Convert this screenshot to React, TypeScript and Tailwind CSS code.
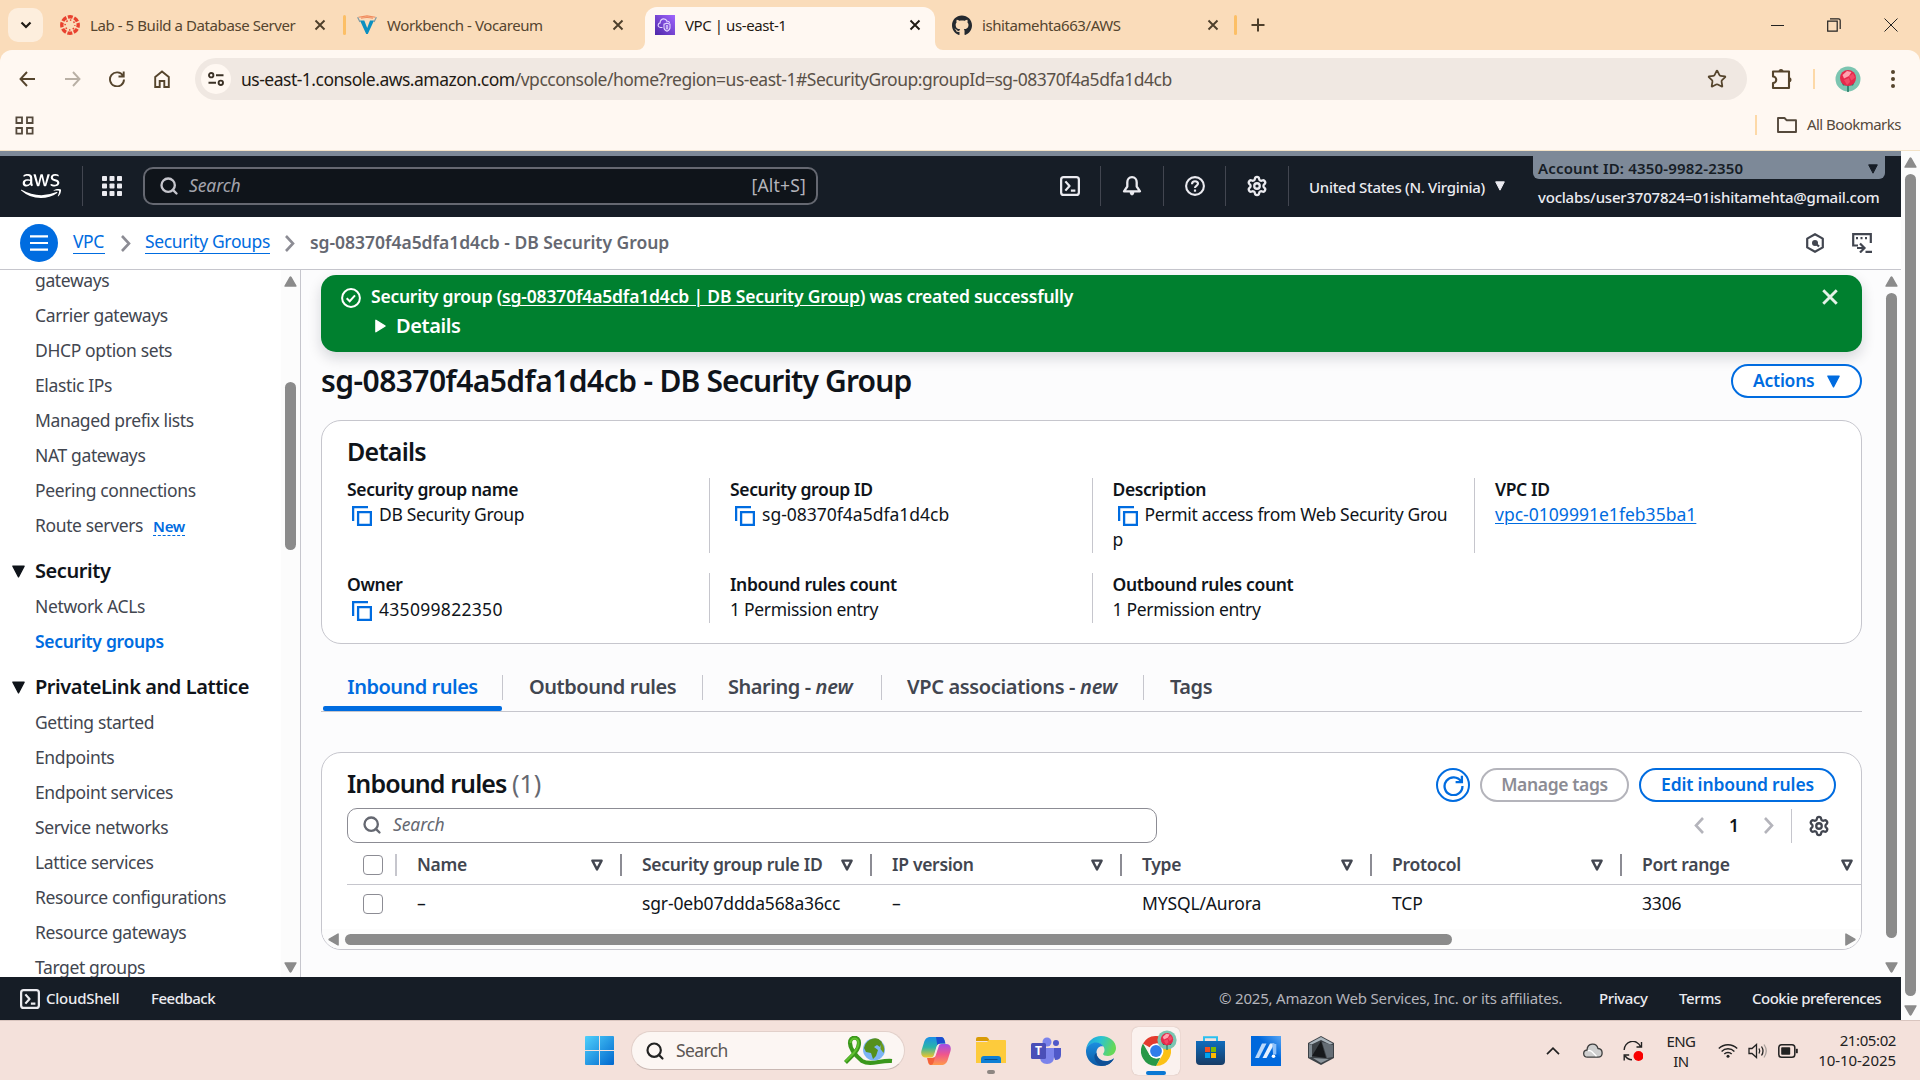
import React from "react";
import { Settings, Star, Search as SearchIcon } from "lucide-react";
import { FaAws, FaGithub } from "react-icons/fa";

type P = { className?: string };

/* ---------- shared glyphs ---------- */
const TriDown = ({ className = "" }: P) => (
  <svg viewBox="0 0 12 12" className={`shrink-0 ${className}`} fill="currentColor" stroke="currentColor" strokeWidth="1.2" strokeLinejoin="round">
    <path d="M.8 1h10.4L6 11z" />
  </svg>
);
const TriHollow = ({ className = "" }: P) => (
  <svg viewBox="0 0 12 12" className={`h-3 w-3 shrink-0 ${className}`} fill="none" stroke="#424650" strokeWidth="2.4" strokeLinejoin="round">
    <path d="M1.4 1.6h9.2L6 10.4z" />
  </svg>
);
const TriRight = ({ className = "" }: P) => (
  <svg viewBox="0 0 10 12" className={`shrink-0 ${className}`} fill="currentColor" stroke="currentColor" strokeWidth="1.2" strokeLinejoin="round">
    <path d="M.8 .8v10.4L9.2 6z" />
  </svg>
);
const ScrollArrow = ({ className = "" }: P) => (
  <svg viewBox="0 0 12 10" className={`h-[11px] w-[13px] shrink-0 ${className}`} fill="#8b8b8b" stroke="#8b8b8b" strokeWidth="1.4" strokeLinejoin="round">
    <path d="M1 9.2h10L6.4 1.2q-.4-.5-.8 0z" />
  </svg>
);
const Shell = ({ className = "" }: P) => (
  <svg viewBox="0 0 16 16" className={`h-5 w-5 shrink-0 ${className}`} fill="none" stroke="currentColor" strokeWidth="1.8" strokeLinejoin="round">
    <rect x=".9" y=".9" width="14.2" height="14.2" rx="2" />
    <path d="M4.3 4.3 7.6 8l-3.3 3.7M8.7 11.6h3.6" />
  </svg>
);
const Close = ({ className = "" }: P) => (
  <svg viewBox="0 0 12 12" className={`shrink-0 ${className}`} fill="none" stroke="currentColor" strokeWidth="1.9">
    <path d="M1.5 1.5l9 9M10.5 1.5l-9 9" />
  </svg>
);
const Copy = () => (
  <svg viewBox="0 0 20 20" className="h-5 w-5 shrink-0" fill="none" stroke="#006ce0" strokeWidth="2.3">
    <path d="M1.1 15V1.1H16" />
    <path d="M6.1 6.1h12.8v12.8H6.1z" />
  </svg>
);
const Chevron = ({ className = "" }: P) => (
  <svg viewBox="0 0 10 17" className={`h-[17px] w-[10px] shrink-0 ${className}`} fill="none" stroke="currentColor" strokeWidth="2.6">
    <path d="M1 1l7 7.5L1 16" />
  </svg>
);

/* ---------- browser chrome ---------- */
const Canvas = () => (
  <svg viewBox="0 0 20 20" className="h-5 w-5 shrink-0" fill="none" stroke="#e8412e">
    <circle cx="10" cy="10" r="8.2" strokeWidth="3.4" strokeDasharray="4.9 1.54" strokeDashoffset="2.4" />
    <circle cx="10" cy="10" r="4.9" strokeWidth="1.5" strokeDasharray="1.5 2.35" strokeDashoffset=".7" />
  </svg>
);
const Vocareum = () => (
  <svg viewBox="0 0 20 20" className="h-5 w-5 shrink-0" fill="none">
    <path d="M1.500 2.200 10 .9l8.500 1.300M4 3.200q6-1.400 12 0" stroke="#f08a5d" strokeWidth="1.100" />
    <path d="M.6 2.200 3 7M19.400 2.200 17 7" stroke="#7d9aa5" strokeWidth="1.200" />
    <path d="M3 5.500h4.300l2.900 7.500L13 5.500h4L10.800 19H9.200z" fill="#0b8fc0" />
  </svg>
);
const VpcIcon = () => (
  <svg viewBox="0 0 20 20" className="h-5 w-5 shrink-0" fill="none" stroke="#e4d6ff" strokeWidth="1.1">
    <defs>
      <linearGradient id="vpc" x1="0" y1="1" x2="1" y2="0"><stop stopColor="#4d27a8" /><stop offset="1" stopColor="#a166ff" /></linearGradient>
    </defs>
    <path d="M0 0h20v20H0z" fill="url(#vpc)" stroke="none" />
    <path d="M7.500 12.500H5.500C3.600 12.300 3 11 3.200 9.800 3.400 8.600 4.200 8 5.100 7.900 5 5.500 6.700 3.900 8.700 3.900c1.800 0 2.800 1 3.300 2.400 1.500-.3 2.400.5 2.500 1.700" />
    <path d="M12 8.200l3 1v3.600c0 1.700-1.300 2.700-3 3.400-1.700-.7-3-1.700-3-3.400V9.200z" />
    <path d="M11.300 10.500h1.400v3.500h-1.400z" strokeWidth=".9" />
  </svg>
);
const Rose = ({ className = "" }: P) => (
  <svg viewBox="0 0 26 26" className={`shrink-0 ${className}`}>
    <circle cx="13" cy="13" r="12.500" fill="#7cc5b1" />
    <path d="M13 26v-8" stroke="#0d6b55" strokeWidth="1.300" />
    <path d="M6 15l7 5 7-5-2 4.500-5-.5-5 .5z" fill="#0d7f66" />
    <circle cx="13" cy="12" r="8" fill="#e6294b" />
    <path d="M7.500 9 12 5l4.500 1-2.500 4-5 2.500z" fill="#ffa3b0" />
    <path d="M14 10.500l4-3 2 4-3.500 3zM9 14l5-2 1 4-3 3z" fill="#f24a66" />
  </svg>
);

const tabText = "whitespace-nowrap text-[15px] leading-none tracking-[-0.42px]";

function TabStrip() {
  return (
    <div className="flex h-[50px] items-end bg-[#fadcba]">
      <div className="flex h-[50px] w-[637px] items-center pl-2 pb-2">
        <div className="mt-2 flex h-[34px] w-[35px] items-center justify-center rounded-[10px] bg-[#fdeedd]">
          <svg viewBox="0 0 12 8" className="h-2 w-3" fill="none" stroke="#1f1a14" strokeWidth="2.200"><path d="M1.500 1.500 6 6l4.500-4.500" /></svg>
        </div>
        <div className="mt-2 ml-[17px] flex items-center">
          <Canvas />
          <span className={`ml-[10px] w-[220px] text-[#55452f] ${tabText}`}>Lab - 5 Build a Database Server</span>
          <Close className="ml-[4px] h-3 w-3 text-[#4d3f2b]" />
          <span className="ml-[17px] h-5 w-[3px] rounded bg-[#fcbf66]" />
          <span className="ml-[11px] flex"><Vocareum /></span>
          <span className={`ml-[10px] w-[225px] text-[#55452f] ${tabText}`}>Workbench - Vocareum</span>
          <Close className="h-3 w-3 text-[#4d3f2b]" />
        </div>
      </div>
      <svg viewBox="0 0 8 8" className="h-2 w-2 shrink-0"><path d="M8 0v8H0a8 8 0 0 0 8-8z" fill="#fff8f2" /></svg>
      <div className="flex h-[43px] w-[290px] items-center rounded-t-[12px] bg-[#fff8f2] pb-[7px] pl-[10px]">
        <VpcIcon />
        <span className={`ml-[10px] w-[224px] text-[#1f1a14] ${tabText}`}>VPC | us-east-1</span>
        <Close className="h-3 w-3 text-[#1f1a14]" />
      </div>
      <svg viewBox="0 0 8 8" className="h-2 w-2 shrink-0"><path d="M0 0v8h8a8 8 0 0 1-8-8z" fill="#fff8f2" /></svg>
      <div className="flex h-[50px] flex-1 items-center pl-[9px]">
        <FaGithub className="h-[21px] w-5 shrink-0 text-[#24292f]" />
        <span className={`ml-[10px] w-[225px] text-[#55452f] ${tabText}`}>ishitamehta663/AWS</span>
        <Close className="h-3 w-3 text-[#4d3f2b]" />
        <span className="ml-[15px] h-5 w-[3px] rounded bg-[#fcbf66]" />
        <svg viewBox="0 0 14 14" className="ml-[14px] h-[14px] w-[14px]" stroke="#4d3f2b" strokeWidth="2"><path d="M7 .5v13M.5 7h13" /></svg>
        <div className="ml-auto mr-[22px] flex items-center gap-[43px]">
          <span className="h-px w-[13px] bg-[#222]" />
          <svg viewBox="0 0 14 14" className="h-[14px] w-[14px]" fill="none" stroke="#222" strokeWidth="1.200"><path d="M.7 3.200h9.500v10H.7zM3 .9h8.500q1.700 0 1.700 1.700v8.400" /></svg>
          <svg viewBox="0 0 14 14" className="h-[14px] w-[14px]" stroke="#222" strokeWidth="1"><path d="M.5.500l13 13M13.500.500l-13 13" /></svg>
        </div>
      </div>
    </div>
  );
}

function Toolbar() {
  return (
    <div className="bg-[#fadcba]">
      <div className="flex h-[101px] flex-col rounded-t-[12px] border-b border-[#f3e3c8] bg-[#fff8f2] pt-2">
        <div className="flex h-[42px] items-center text-[#56452d]">
          <svg viewBox="0 0 16 16" className="ml-[19px] h-[16px] w-[16px]" fill="none" stroke="currentColor" strokeWidth="1.900"><path d="M8 1 1.500 8 8 15M1.500 8H16" /></svg>
          <svg viewBox="0 0 16 16" className="ml-[30px] h-[16px] w-[16px] text-[#b9b0a5]" fill="none" stroke="currentColor" strokeWidth="1.900"><path d="M8 1l6.500 7L8 15M14.500 8H0" /></svg>
          <svg viewBox="0 0 16 16" className="ml-[28px] h-[16px] w-[16px]" fill="none" stroke="currentColor" strokeWidth="1.900"><path d="M14 4.800A7 7 0 1 0 15 8.500M14.700.500v5H9.500" /></svg>
          <svg viewBox="0 0 16 18" className="ml-[29px] h-[18px] w-[16px]" fill="none" stroke="currentColor" strokeWidth="1.900"><path d="M1.200 7 8 1.400 14.800 7v10h-4.500v-6H5.700v6H1.200z" /></svg>
          <div className="ml-[25px] flex h-[42px] w-[1552px] items-center rounded-full bg-[#f0e8e2] pl-[6px] pr-[20px]">
            <div className="flex h-[30px] w-[30px] items-center justify-center rounded-full bg-[#fff8f2]">
              <svg viewBox="0 0 16 14" className="h-[14px] w-4" fill="none" stroke="#3b3126" strokeWidth="1.900"><circle cx="3.200" cy="3.200" r="2.200" /><path d="M8 3.200h7.500M.500 10.800H8" /><circle cx="12.800" cy="10.800" r="2.200" /></svg>
            </div>
            <span className="ml-[10px] mt-[2px] whitespace-nowrap text-[17.5px] leading-none tracking-[-0.5px] text-[#5a5148]">
              <span className="text-[#1f1a14]">us-east-1.console.aws.amazon.com</span>/vpcconsole/home?region=us-east-1#SecurityGroup:groupId=sg-08370f4a5dfa1d4cb
            </span>
            <Star className="ml-auto h-5 w-5" strokeWidth={2.100} strokeLinejoin="miter" />
          </div>
          <svg viewBox="0 0 22 22" className="ml-[24px] h-[22px] w-[22px]" fill="none" stroke="currentColor" strokeWidth="2.100" strokeLinejoin="round">
            <path d="M2 3.500h16v16.500H2v-5a3.200 3.200 0 0 0 0-6.500z" />
            <path d="M7.500 3.500a2.500 2.500 0 0 1 5 0zM18 9.300a2.500 2.500 0 0 1 0 5z" fill="currentColor" stroke="none" />
          </svg>
          <span className="ml-[20px] h-5 w-[2px] bg-[#fdd9a8]" />
          <Rose className="ml-[20px] h-[26px] w-[26px]" />
          <svg viewBox="0 0 4 18" className="ml-[30px] h-[18px] w-1" fill="#56452d"><circle cx="2" cy="2" r="2" /><circle cx="2" cy="9" r="2" /><circle cx="2" cy="16" r="2" /></svg>
        </div>
        <div className="flex h-[50px] items-center pl-[15px] pr-[19px] text-[#55493c]">
          <svg viewBox="0 0 19 19" className="h-[19px] w-[19px]" fill="none" stroke="currentColor" strokeWidth="1.800"><path d="M1.400 1.400h5.600V7H1.400zM12 1.400h5.600V7H12zM1.400 12h5.600v5.600H1.400zM12 12h5.600v5.600H12z" /></svg>
          <span className="ml-auto h-5 w-[2px] bg-[#fdd9a8]" />
          <svg viewBox="0 0 20 16" className="ml-[20px] h-4 w-5" fill="none" stroke="currentColor" strokeWidth="1.900" strokeLinejoin="round"><path d="M1 1h6.500l2 2.200H19V15H1z" /></svg>
          <span className="ml-[10px] w-[94px] pb-px whitespace-nowrap text-[15px] leading-none tracking-[-0.55px]">All Bookmarks</span>
        </div>
      </div>
    </div>
  );
}

/* ---------- console header ---------- */
const navDivider = "h-10 w-px bg-[#424650]";

function ConsoleHeader() {
  return (
    <header className="border-t-[5px] border-[#7d8998] bg-[#161d26]">
      <div className="flex h-[61px] items-start text-[#ebebf0]">
        <div className="flex h-[60px] items-center">
          <FaAws className="ml-[21px] h-[32px] w-10 shrink-0 text-white" />
          <span className={`ml-[21px] w-[2px] ${navDivider}`} />
          <svg viewBox="0 0 20 20" className="ml-[19px] h-5 w-5 shrink-0" fill="currentColor">
            {[0, 7.500, 15].map((y) => [0, 7.500, 15].map((x) => <rect key={`${x}-${y}`} x={x} y={y} width="5" height="5" rx=".8" />))}
          </svg>
          <div className="ml-[21px] flex h-[38px] w-[675px] items-center rounded-[10px] border-2 border-[#656871] bg-[#0f141a] pl-[14px] pr-[10px]">
            <SearchIcon className="h-5 w-5 text-[#c6c6cd]" strokeWidth={2.800} />
            <span className="ml-[10px] text-[17.5px] italic leading-none tracking-[-0.1px] text-[#a4a4ad]">Search</span>
            <span className="ml-auto text-[17.5px] leading-none tracking-[0.2px] text-[#b4b4bb]">[Alt+S]</span>
          </div>
          <Shell className="ml-[242px]" />
          <span className={`ml-[20px] ${navDivider}`} />
          <svg viewBox="0 0 20 22" className="ml-[21px] h-[22px] w-5 shrink-0" fill="none" stroke="currentColor" strokeWidth="2.300" strokeLinejoin="round">
            <path d="M10 2.200c-3 0-4.700 2.200-4.700 5V11.500L2 16.300h16l-3.300-4.800V7.200c0-2.800-1.700-5-4.700-5z" /><path d="M8 17.500q.5 2.500 2 2.500t2-2.500z" fill="currentColor" strokeWidth="1" />
          </svg>
          <span className={`ml-[21px] ${navDivider}`} />
          <svg viewBox="0 0 20 20" className="ml-[21px] h-5 w-5 shrink-0" fill="none" stroke="currentColor" strokeWidth="2.100">
            <circle cx="10" cy="10" r="8.900" /><path d="M7 8.200q0-3 3-3t3 2.600c0 1.700-3 1.900-3 4.200" /><path d="M10 13.500v2.200" strokeWidth="2.200" />
          </svg>
          <span className={`ml-[20px] ${navDivider}`} />
          <Settings className="ml-[20px] h-[22px] w-[22px] shrink-0" strokeWidth={2.500} />
          <span className={`ml-[20px] ${navDivider}`} />
          <span className="ml-[20px] mt-[2px] w-[186px] whitespace-nowrap text-[15px] font-medium leading-none tracking-[-0.3px]">United States (N. Virginia)</span>
          <TriDown className="h-[10px] w-[10px]" />
        </div>
        <div className="ml-[28px] flex h-[61px] w-[352px] flex-col">
          <div className="flex h-[23px] items-center justify-between rounded-b-[6px] bg-[#7d8998] pl-[5px] pr-[7px] pt-[2px] text-[#161d26]">
            <span className="whitespace-nowrap text-[15px] font-semibold leading-none tracking-[0.18px]">Account ID: 4350-9982-2350</span>
            <TriDown className="h-[10px] w-[10px]" />
          </div>
          <div className="flex h-[36px] items-center pl-[5px]">
            <span className="whitespace-nowrap text-[15px] font-medium leading-none tracking-[-0.22px]">voclabs/user3707824=01ishitamehta@gmail.com</span>
          </div>
        </div>
      </div>
    </header>
  );
}

function Breadcrumbs() {
  return (
    <div className="flex h-[53px] shrink-0 items-center border-b border-[#c6c6cd] bg-white pl-5 text-[17.5px] leading-none">
      <div className="flex h-[38px] w-[38px] items-center justify-center rounded-full bg-[#006ce0]">
        <svg viewBox="0 0 18 16" className="h-4 w-[18px]" stroke="#fff" strokeWidth="2.200"><path d="M0 1.300h18M0 8h18M0 14.700h18" /></svg>
      </div>
      <span className="ml-[15px] mt-px w-[32px] border-b border-[#006ce0] pb-[2px] tracking-[-0.4px] text-[#006ce0]">VPC</span>
      <Chevron className="ml-[16px] text-[#8c8c94]" />
      <span className="ml-[14px] mt-px w-[125px] whitespace-nowrap border-b border-[#006ce0] pb-[2px] tracking-[-0.36px] text-[#006ce0]">Security Groups</span>
      <Chevron className="ml-[15px] text-[#8c8c94]" />
      <span className="ml-[15px] whitespace-nowrap font-semibold tracking-[-0.03px] text-[#656871]">sg-08370f4a5dfa1d4cb - DB Security Group</span>
      <div className="ml-auto mr-[29px] flex items-center gap-[27px] text-[#424650]">
        <svg viewBox="0 0 20 20" className="h-5 w-5" fill="none" stroke="currentColor" strokeWidth="2.200" strokeLinejoin="round"><path d="M10 1.200l7.800 4.400v8.800L10 18.800l-7.800-4.400V5.600z" /><circle cx="10" cy="10" r="3" fill="currentColor" stroke="none" /><path d="M10 10l4 3.500" /></svg>
        <svg viewBox="0 0 20 20" className="h-5 w-5" fill="none" stroke="currentColor" strokeWidth="2.200"><path d="M6 12.500H1.200V1.200h17.600V10M4 5.200h2M8.500 5.200h2M13 5.200h2M5 15h6M8 10.500l4.500 4.500L8 19.500M13.500 18.900H20" /></svg>
      </div>
    </div>
  );
}

/* ---------- sidebar ---------- */
function NavItem({ label, children }: { label: string; children?: React.ReactNode }) {
  const active = label === "Security groups";
  return (
    <div className={`flex h-[35px] shrink-0 items-center whitespace-nowrap pl-[35px] ${active ? "font-semibold tracking-[-0.3px] text-[#006ce0]" : "tracking-[-0.37px] text-[#424650]"}`}>
      {label}
      {children}
    </div>
  );
}
const NavHead = ({ label }: { label: string }) => (
  <div className="mt-[10px] flex h-[36px] shrink-0 items-center whitespace-nowrap pl-[12px] text-[20px] font-semibold tracking-[-0.43px] text-[#0f141a]">
    <TriDown className="mr-[10px] h-[13px] w-[13px]" />
    {label}
  </div>
);

function Sidebar() {
  return (
    <aside className="flex h-[707px] w-[301px] shrink-0 overflow-hidden border-r border-[#c6c6cd] bg-white">
      <nav className="-mt-[7px] flex h-[714px] w-[281px] flex-col overflow-hidden text-[17.5px] leading-none">
        {["gateways", "Carrier gateways", "DHCP option sets", "Elastic IPs", "Managed prefix lists", "NAT gateways", "Peering connections"].map((l) => <NavItem key={l} label={l} />)}
        <NavItem label="Route servers">
          <span className="ml-[10px] border-b border-dashed border-[#006ce0] pb-px pt-[3px] text-[15px] font-semibold tracking-[-0.3px] text-[#006ce0]">New</span>
        </NavItem>
        <NavHead label="Security" />
        <NavItem label="Network ACLs" />
        <NavItem label="Security groups" />
        <NavHead label="PrivateLink and Lattice" />
        {["Getting started", "Endpoints", "Endpoint services", "Service networks", "Lattice services", "Resource configurations", "Resource gateways", "Target groups"].map((l) => <NavItem key={l} label={l} />)}
      </nav>
      <div className="flex w-[19px] flex-col items-center bg-[#fcfcfc] pt-[6px]">
        <ScrollArrow />
        <span className="mt-[95px] h-[168px] w-[11px] rounded-full bg-[#8b8b8b]" />
        <ScrollArrow className="mt-auto mb-[4px] rotate-180" />
      </div>
    </aside>
  );
}

/* ---------- main ---------- */
function Banner() {
  return (
    <div className="flex h-[77px] shrink-0 rounded-[15px] bg-[#00802f] pl-5 pt-3 text-white shadow-[0_6px_14px_rgba(15,20,40,0.16)]">
      <svg viewBox="0 0 20 20" className="mt-px h-5 w-5" fill="none" stroke="#fff" strokeWidth="2"><circle cx="10" cy="10" r="8.900" /><path d="M5.700 10.200l3 3 5.300-5.800" /></svg>
      <div className="ml-[10px] flex flex-col font-semibold leading-none">
        <span className="flex h-5 items-center whitespace-pre text-[17.5px] tracking-[-0.24px]">
          Security group (<span className="tracking-[-0.17px] underline decoration-1 underline-offset-[2px]">sg-08370f4a5dfa1d4cb | DB Security Group</span>) was created successfully
        </span>
        <span className="mt-[9px] flex h-5 items-center pl-1 text-[20px] tracking-[-0.4px]"><TriRight className="mr-[10px] h-[14px] w-[11px]" />Details</span>
      </div>
      <Close className="ml-auto mr-[23px] mt-[1px] h-[18px] w-[18px] text-[#e4f2e8]" />
    </div>
  );
}

function Field({ label, children, first = false }: { label: string; children: React.ReactNode; first?: boolean }) {
  return (
    <div className={`flex flex-col whitespace-nowrap ${first ? "w-[362px]" : "w-[382.5px] border-l border-[#c6c6cd] pl-[20px]"}`}>
      <span className="-mt-px flex h-[25px] items-center font-semibold tracking-[-0.35px]">{label}</span>
      <span className="flex h-[25px] items-center tracking-[-0.3px]">{children}</span>
    </div>
  );
}

const CopyButton = () => <span className="ml-[5px] mr-[7px] mt-[2px]"><Copy /></span>;

function DetailsCard() {
  return (
    <section className="flex h-[224px] shrink-0 flex-col rounded-[20px] border border-[#c6c6cd] bg-white pl-[25px] leading-none text-[#0f141a]">
      <h2 className="mt-[15px] flex h-[31px] items-center text-[25px] font-semibold tracking-[-0.75px]">Details</h2>
      <div className="mt-[11px] flex h-[75px] text-[17.5px]">
        <Field label="Security group name" first><CopyButton /><span className="tracking-[-0.33px]">DB Security Group</span></Field>
        <Field label="Security group ID"><CopyButton /><span className="tracking-[0px]">sg-08370f4a5dfa1d4cb</span></Field>
        <div className="flex w-[382.5px] flex-col whitespace-nowrap border-l border-[#c6c6cd] pl-[20px]">
          <span className="-mt-px flex h-[25px] items-center font-semibold tracking-[-0.4px]">Description</span>
          <span className="flex h-[25px] items-center"><CopyButton /><span className="tracking-[-0.31px]">Permit access from Web Security Grou</span></span>
          <span className="flex h-[25px] items-center">p</span>
        </div>
        <Field label="VPC ID"><span className="tracking-[0.02px] text-[#006ce0] underline decoration-1 underline-offset-[2px]">vpc-0109991e1feb35ba1</span></Field>
      </div>
      <div className="mt-[20px] flex h-[50px] text-[17.5px]">
        <Field label="Owner" first><CopyButton /><span className="tracking-[0.3px]">435099822350</span></Field>
        <Field label="Inbound rules count">1 Permission entry</Field>
        <Field label="Outbound rules count">1 Permission entry</Field>
      </div>
    </section>
  );
}

function Tabs() {
  const tab = "flex h-[48px] items-center whitespace-nowrap";
  const sep = "h-[25px] w-px bg-[#c6c6cd]";
  return (
    <div className="mt-[19px] flex h-[49px] shrink-0 items-center border-b border-[#c6c6cd] text-[20px] font-semibold leading-none tracking-[-0.45px] text-[#424650]">
      <div className="ml-[2px] flex h-[48px] w-[179px] flex-col items-center justify-between text-[#006ce0]">
        <span className="flex h-[48px] items-center whitespace-nowrap tracking-[-0.5px]">Inbound rules</span>
        <span className="-mt-[5px] h-[5px] w-[179px] shrink-0 rounded-[2px] bg-[#006ce0]" />
      </div>
      <span className={sep} />
      <span className={`${tab} w-[199px] pl-[26px]`}>Outbound rules</span>
      <span className={sep} />
      <span className={`${tab} w-[178px] pl-[25px]`}><span className="whitespace-pre">Sharing - </span><em className="tracking-[-0.1px]">new</em></span>
      <span className={sep} />
      <span className={`${tab} w-[261px] pl-[25px]`}><span className="whitespace-pre tracking-[-0.35px]">VPC associations - </span><em className="tracking-[-0.1px]">new</em></span>
      <span className={sep} />
      <span className={`${tab} pl-[26px]`}>Tags</span>
    </div>
  );
}

const Checkbox = () => <span className="h-5 w-5 shrink-0 rounded-[4px] border border-[#8c8c94] bg-white" />;
const columns: [string, string][] = [["Name", "–"], ["Security group rule ID", "sgr-0eb07ddda568a36cc"], ["IP version", "–"], ["Type", "MYSQL/Aurora"], ["Protocol", "TCP"], ["Port range", "3306"]];

function RulesCard() {
  return (
    <section className="mt-[40px] flex h-[198px] shrink-0 flex-col overflow-hidden rounded-[20px] border border-[#c6c6cd] bg-white text-[17.5px] leading-none text-[#0f141a]">
      <div className="mt-[15px] flex h-[34px] shrink-0 items-center pl-[25px] pr-[25px] font-semibold">
        <h2 className="-mt-[3px] whitespace-nowrap text-[25px] tracking-[-0.9px]">Inbound rules <span className="font-normal tracking-[0px] text-[#656871]">(1)</span></h2>
        <div className="ml-auto flex h-[34px] w-[34px] items-center justify-center rounded-full border-2 border-[#006ce0]">
          <svg viewBox="0 0 20 20" className="h-[21px] w-[21px] shrink-0" fill="none" stroke="#006ce0" strokeWidth="2.200"><path d="M17.200 6.200A8.500 8.500 0 1 0 18.500 10.500M18 .800v6h-6" /></svg>
        </div>
        <span className="ml-[10px] flex h-[34px] w-[149px] items-center justify-center whitespace-nowrap rounded-full border-2 border-[#b4b4bb] tracking-[-0.35px] text-[#8c8c94]">Manage tags</span>
        <span className="ml-[10px] flex h-[34px] w-[197px] items-center justify-center whitespace-nowrap rounded-full border-2 border-[#006ce0] tracking-[-0.15px] text-[#006ce0]">Edit inbound rules</span>
      </div>
      <div className="mt-[6px] flex h-[35px] shrink-0 items-center pl-[25px]">
        <div className="flex h-[35px] w-[810px] items-center rounded-[10px] border border-[#8c8c94] pb-px pl-[14px]">
          <SearchIcon className="h-5 w-5 text-[#656871]" strokeWidth={2.800} />
          <span className="ml-[11px] italic tracking-[-0.1px] text-[#656871]">Search</span>
        </div>
        <Chevron className="ml-[537px] rotate-180 text-[#b4b4bb]" />
        <span className="ml-[25px] w-[10px] text-center font-semibold">1</span>
        <Chevron className="ml-[25px] text-[#b4b4bb]" />
        <span className="ml-[17px] h-[34px] w-px bg-[#c6c6cd]" />
        <Settings className="ml-[16px] h-[22px] w-[22px] text-[#424650]" strokeWidth={2.500} />
      </div>
      <div className="ml-[25px] flex h-[42px] shrink-0 items-center border-b border-[#c6c6cd] pl-[16px] pt-[3px] font-semibold tracking-[-0.3px] text-[#424650]">
        <span className="-mt-px flex shrink-0"><Checkbox /></span>
        <span className="ml-[12px] h-[22px] w-[2px] shrink-0 bg-[#c6c6cd]" />
        {columns.map(([name], i) => (
          <div key={name} className={`flex h-[38px] shrink-0 items-center whitespace-nowrap pl-[20px] ${i === 0 ? "w-[225px]" : "w-[250px]"}`}>
            <span>{name}</span>
            <TriHollow className="ml-auto mr-[17px]" />
            <span className="h-[22px] w-[2px] bg-[#8c8c94]" />
          </div>
        ))}
      </div>
      <div className="ml-[25px] flex h-[44px] shrink-0 items-center pb-[6px] pl-[16px]">
        <span className="-mt-px flex shrink-0"><Checkbox /></span>
        <span className="ml-[12px] w-[2px] shrink-0" />
        {columns.map(([name, v], i) => (
          <span key={name} className={`shrink-0 whitespace-nowrap pl-[20px] tracking-[-0.15px] ${i === 0 ? "w-[225px]" : "w-[250px]"}`}>{v}</span>
        ))}
      </div>
      <div className="flex h-[20px] shrink-0 items-center bg-[#fcfcfc] pl-[5px] pr-[4px]">
        <ScrollArrow className="-rotate-90" />
        <span className="ml-[5px] h-[11px] w-[1107px] rounded-full bg-[#8b8b8b]" />
        <ScrollArrow className="ml-auto rotate-90" />
      </div>
    </section>
  );
}

function Main() {
  return (
    <main className="flex h-[707px] flex-1 bg-[#fcfcfd]">
      <div className="ml-[20px] flex w-[1541px] flex-col pt-[5px]">
        <Banner />
        <div className="mb-[10px] flex h-[58px] shrink-0 items-center justify-between">
          <h1 className="whitespace-nowrap text-[30px] font-semibold leading-none tracking-[-0.7px] text-[#0f141a]">
            <span className="tracking-[-0.55px]">sg-08370f4a5dfa1d4cb</span> - <span className="tracking-[-0.85px]">DB Security Group</span>
          </h1>
          <div className="flex h-[34px] w-[131px] items-center rounded-full border-2 border-[#006ce0] bg-white pb-px pl-[20px] text-[17.5px] font-semibold leading-none tracking-[-0.25px] text-[#006ce0]">
            Actions<TriDown className="ml-[13px] mt-[2px] h-[13px] w-[13px]" />
          </div>
        </div>
        <DetailsCard />
        <Tabs />
        <RulesCard />
      </div>
      <div className="ml-auto flex w-[19px] flex-col items-center pt-[6px]">
        <ScrollArrow />
        <span className="mt-[6px] h-[645px] w-[11px] rounded-full bg-[#8b8b8b]" />
        <ScrollArrow className="mt-auto mb-[4px] rotate-180" />
      </div>
    </main>
  );
}

function Footer() {
  return (
    <footer className="flex h-[43px] shrink-0 items-center whitespace-nowrap bg-[#161d26] pl-5 text-[15px] font-medium leading-none text-[#ebebf0]">
      <Shell />
      <span className="ml-[6px] w-[105px] tracking-[-0.25px]">CloudShell</span>
      <span className="tracking-[-0.5px]">Feedback</span>
      <span className="ml-auto w-[380px] font-normal tracking-[-0.19px] text-[#b4b4bb]">© 2025, Amazon Web Services, Inc. or its affiliates.</span>
      <span className="w-[80px] tracking-[-0.4px]">Privacy</span>
      <span className="w-[73px] tracking-[-0.4px]">Terms</span>
      <span className="w-[149px] tracking-[-0.5px]">Cookie preferences</span>
    </footer>
  );
}

/* ---------- taskbar ---------- */
const WinLogo = () => (
  <svg viewBox="0 0 29 29" className="h-[29px] w-[29px]">
    <defs><linearGradient id="win" x1="0" y1="0" x2="29" y2="29" gradientUnits="userSpaceOnUse"><stop stopColor="#4fd0fb" /><stop offset="1" stopColor="#0067ce" /></linearGradient></defs>
    <path d="M0 1q0-1 1-1h13v14H0zM15 0h13q1 0 1 1v13H15zM0 15h14v14H1q-1 0-1-1zM15 15h14v13q0 1-1 1H15z" fill="url(#win)" />
  </svg>
);
const Ribbon = () => (
  <svg viewBox="0 0 50 30" className="h-[30px] w-[50px]" fill="none">
    <path d="M1.500 26.500C8 20 15 14 15 7c0-7-9-7-9 0 0 6 5 12 12 18 9 5 18-1 30 0" stroke="#3a971c" strokeWidth="4.200" />
    <path d="M1.500 25.500C8 19 14.500 13 14.500 7c0-6-8-6-8 0" stroke="#5fc02f" strokeWidth="2" />
    <circle cx="30" cy="13.500" r="11" fill="#7db4f5" />
    <path d="M21.500 8c3-5 9-7 13-5l3.500 3-2 5-3-2-3 2 4 3-2 6-3 3-2-6-5-1-2-4z" fill="#55901c" />
    <path d="M37 6c3 3 4 7 2.500 11l-3-4z" fill="#6d9a1e" />
  </svg>
);
const Copilot = () => (
  <svg viewBox="0 0 30 28" className="h-[28px] w-[30px]">
    <defs>
      <linearGradient id="cpa" x1="0" y1="0" x2="0" y2="1"><stop stopColor="#1a8fe8" /><stop offset=".5" stopColor="#2ab4a8" /><stop offset="1" stopColor="#f6c626" /></linearGradient>
      <linearGradient id="cpb" x1="0" y1="0" x2="0" y2="1"><stop stopColor="#a04ee8" /><stop offset=".5" stopColor="#f0568c" /><stop offset="1" stopColor="#ff9a4a" /></linearGradient>
    </defs>
    <path d="M10 0h10q2.500 0 3.400 3l1 3.500h-5c-2 0-2.800 1-3.400 3l-2.500 8q-1 3-3.500 3H5c-4 0-5.500-3-4.500-7l2.500-8C4.200 1.500 6 0 10 0z" fill="url(#cpa)" />
    <path d="M15 0h5q2.500 0 3.400 3l1 3.500h-5q-2 0-3 2z" fill="#1d4ed0" />
    <path d="M20 28H10q-2.500 0-3-3l-1-4h5c2 0 2.800-1 3.400-3l2.500-8q1-3 3.500-3H25c4 0 5.500 3 4.500 7l-2.500 8c-1.200 4-3 6-7 6z" fill="url(#cpb)" />
    <path d="M6.500 21H11q2 0 3-2.500l2-6-3.500 13q-.8 2.500-3 2.500Q8 28 7.300 25z" fill="#f4623a" />
    <path d="M15.500 9.500q.8-2.500 3-2.500l-4 12-1 1.200h-2.500q1.500-.5 2-2.200z" fill="#f6e7e2" />
  </svg>
);
const Explorer = () => (
  <svg viewBox="0 0 30 27" className="h-[27px] w-[30px]">
    <path d="M0 2q0-2 2-2h8q1 0 2 1l2 3H0z" fill="#d99b06" />
    <path d="M0 5h11l2-2h16q1 0 1 1v22H0z" fill="#fdcb3c" />
    <path d="M5 26v-4q0-3 3-3h14q3 0 3 3v4z" fill="#0f7fd4" /><path d="M8.500 22.500h13" stroke="#0b4f8c" strokeWidth="1" />
  </svg>
);
const Teams = () => (
  <div className="relative h-[28px] w-[30px]">
    <svg viewBox="0 0 30 28" className="h-[28px] w-[30px]">
      <circle cx="25" cy="6" r="3" fill="#5059c9" /><path d="M20 11h10v7q0 5-6 5z" fill="#5059c9" />
      <circle cx="16" cy="5" r="4.500" fill="#7b83eb" /><path d="M9 11h14v9q0 7-7 7t-7-7z" fill="#7b83eb" />
      <rect y="6" width="15" height="16" rx="1.500" fill="#4a4fb8" />
    </svg>
    <span className="absolute left-0 top-[6px] flex h-4 w-[15px] items-center justify-center text-[12px] font-bold leading-none text-white">T</span>
  </div>
);
const Edge = () => (
  <svg viewBox="0 0 30 30" className="h-[30px] w-[30px]">
    <defs>
      <linearGradient id="eda" x1="0" y1="0" x2="1" y2=".3"><stop stopColor="#1b9de2" /><stop offset=".5" stopColor="#2bc3d2" /><stop offset="1" stopColor="#65d858" /></linearGradient>
      <linearGradient id="edb" x1="0" y1="0" x2="0" y2="1"><stop stopColor="#1b8ee0" /><stop offset="1" stopColor="#0c59a4" /></linearGradient>
    </defs>
    <path d="M0 14C1 5 8 0 15 0c9 0 15 6 15 12 0 5-4 8-8 8-3 0-5-1-5-2 0-.8 1.500-1.500 1.500-4C18.500 10 15 7 10 7 5 7 1 10 0 14z" fill="url(#eda)" />
    <path d="M0 14c1-5 6-7.500 10-7.500 3 0 6 1.500 7.500 4-4-1-7 2-7 6 0 6 6 10 13 8q3-1 4.500-2.500C26 27 21 30 15 30 6 30-.5 23 0 14z" fill="url(#edb)" />
    <path d="M10.500 17c0 6 6 10 13 7.800q3-1 4.500-2.300C26 27 21 30 15.500 30 9 28 6 19 10.500 17z" fill="#0f4f96" />
  </svg>
);
const Chrome = () => (
  <div className="relative flex h-[48px] w-[48px] items-center justify-center rounded-[6px] bg-[#fbf2ef] shadow-[0_0_1px_rgba(120,90,80,0.5)]">
    <svg viewBox="0 0 30 30" className="h-[30px] w-[30px]">
      <path d="M15 15 2 7.500A15 15 0 0 1 28 7.500H15z" fill="#e33b2e" />
      <path d="M15 15 28 7.500A15 15 0 0 1 15 30l6.500-11.200z" fill="#fbc116" />
      <path d="M15 30A15 15 0 0 1 2 7.500l6.500 11.250L15 22.500l4.300-.500z" fill="#279847" />
      <circle cx="15" cy="15" r="7.500" fill="#fff" /><circle cx="15" cy="15" r="5.900" fill="#2f7de9" />
    </svg>
    <Rose className="absolute right-[3px] top-[3px] h-5 w-5" />
    <span className="absolute bottom-0 left-[14px] h-1 w-5 rounded-full bg-[#0a78d4]" />
  </div>
);
const Store = () => (
  <svg viewBox="0 0 29 29" className="h-[29px] w-[29px]">
    <defs><linearGradient id="sto" x1="0" y1="0" x2="0" y2="1"><stop stopColor="#0f6cbd" /><stop offset="1" stopColor="#173c66" /></linearGradient></defs>
    <path d="M8 6V1.200h13V6" fill="none" stroke="#2bc0f0" strokeWidth="2" />
    <path d="M0 5h29v20q0 4-4 4H4q-4 0-4-4z" fill="url(#sto)" />
    <path d="M9 11h5v5H9z" fill="#f25022" /><path d="M15 11h5v5h-5z" fill="#7fba00" /><path d="M9 17h5v5H9z" fill="#00a4ef" /><path d="M15 17h5v5h-5z" fill="#ffb900" />
  </svg>
);
const MyAsus = () => (
  <svg viewBox="0 0 30 30" className="h-[30px] w-[30px]">
    <defs><linearGradient id="asu" x1="0" y1="1" x2="1" y2="0"><stop stopColor="#0068dc" /><stop offset=".6" stopColor="#0068dc" /><stop offset="1" stopColor="#58a6f6" /></linearGradient></defs>
    <path d="M0 0h30v30H0z" fill="url(#asu)" />
    <path d="M4 22 11 7.500h4.500L8 22z" fill="#b9d8fb" /><path d="M11.500 22 19 7.500h4.500L15.500 22z" fill="#e6f1ff" /><path d="M21.300 8h4v10.500h-3.200z" fill="#8cc0fa" /><circle cx="22.500" cy="20.300" r="1.800" fill="#fff" />
  </svg>
);
const Cube = () => (
  <svg viewBox="0 0 26 29" className="h-[29px] w-[26px]">
    <path d="M13 0l13 7v15l-13 7L0 22V7z" fill="#3c4146" /><path d="M13 1l12 6.500-3 1L13 4 3.500 8.500 1 7.500z" fill="#a9b3bb" />
    <path d="M1 8l3 1v12l-3 .500z" fill="#7d878f" /><path d="M13 5 4 20l14 2z" fill="#16181b" /><path d="M14 6l5 16 6-1V9z" fill="#666e76" /><path d="M5 22l8 5 8-4z" fill="#8b949b" />
  </svg>
);

function Taskbar() {
  return (
    <div className="flex h-[60px] items-center border-t border-[#d9c5bf] bg-[#f4e1db] pl-[585px]">
      <WinLogo />
      <div className="ml-[17px] flex h-[39px] w-[274px] items-center rounded-full border border-[#e2d0ca] border-b-[#c9b8b3] bg-[#fcf6f3] pl-[13px] pr-[10px]">
        <SearchIcon className="h-[20px] w-[20px] text-[#222]" strokeWidth={2.600} />
        <span className="ml-[11px] text-[17.5px] leading-none tracking-[-0.6px] text-[#5c5653]">Search</span>
        <span className="ml-auto"><Ribbon /></span>
      </div>
      <span className="ml-[16px]"><Copilot /></span>
      <div className="ml-[25px] flex h-[59px] w-[30px] flex-col items-center pt-[16px]">
        <Explorer />
        <span className="mt-[6px] h-1 w-2 shrink-0 rounded-full bg-[#8d8682]" />
      </div>
      <span className="ml-[25px]"><Teams /></span>
      <span className="ml-[25px]"><Edge /></span>
      <span className="ml-[16px]"><Chrome /></span>
      <span className="ml-[16px]"><Store /></span>
      <span className="ml-[26px]"><MyAsus /></span>
      <span className="ml-[27px]"><Cube /></span>
      <svg viewBox="0 0 14 8" className="ml-[212px] h-2 w-[14px]" fill="none" stroke="#222" strokeWidth="1.700"><path d="M1 7.200l6-6 6 6" /></svg>
      <svg viewBox="0 0 20 15" className="ml-[23px] h-[15px] w-5" fill="#cfcfcf" stroke="#3f3f3f" strokeWidth="1.300"><path d="M4.500 14.200C-.500 14-.500 7.500 4 7 4.500-.500 13.500-.800 15 5.500c5.500.500 5.500 8.500 0 8.700z" /><path d="M5 7.800q2-1 4 1l4.500 4.500" stroke="#fff" fill="none" /></svg>
      <svg viewBox="0 0 20 20" className="ml-[20px] h-5 w-5" fill="none" stroke="#222" strokeWidth="1.400"><path d="M1.200 9A8.500 8.500 0 0 1 17.500 5.500M18.500 1v5h-5M9 18.800A8.500 8.500 0 0 1 2.200 15M1.200 19.500V14h5" /><circle cx="15.500" cy="15" r="5" fill="#f80000" stroke="none" /></svg>
      <div className="ml-[23px] flex w-[30px] flex-col items-center text-[15px] leading-[20px] tracking-[-0.6px] text-[#222]"><span>ENG</span><span>IN</span></div>
      <svg viewBox="0 0 20 15" className="ml-[22px] h-[15px] w-5" fill="none" stroke="#222" strokeWidth="1.400"><path d="M.8 5.500a13 13 0 0 1 18.400 0M3.600 8.400a9 9 0 0 1 12.800 0M6.300 11a5.200 5.200 0 0 1 7.400 0" /><circle cx="10" cy="13.200" r="1.500" fill="#222" stroke="none" /></svg>
      <svg viewBox="0 0 20 16" className="ml-[10px] h-4 w-5" fill="none" stroke="#222" strokeWidth="1.300"><path d="M1 5.500h3L8.500 1.500v13L4 10.500H1zM11 5.500q1.500 2.500 0 5M13.500 3.500q3 4.500 0 9" /><path d="M16 1.500q4.500 6.500 0 13" stroke="#a9a09c" /></svg>
      <svg viewBox="0 0 20 14" className="ml-[10px] h-[14px] w-5" fill="none" stroke="#222" strokeWidth="1.500"><rect x=".8" y=".8" width="16" height="12.400" rx="2.800" /><rect x="3.200" y="3.200" width="9" height="7.600" rx=".8" fill="#222" stroke="none" /><path d="M18.800 4.800v4.400" strokeWidth="2" /></svg>
      <div className="ml-auto mr-[24px] -mt-px flex flex-col items-end whitespace-nowrap text-[15px] leading-[20px] text-[#222]"><span className="tracking-[-0.4px]">21:05:02</span><span className="tracking-[-0.05px]">10-10-2025</span></div>
    </div>
  );
}

export default function App() {
  return (
    <div className="flex h-[1080px] w-[1920px] flex-col overflow-hidden bg-white font-['Noto_Sans','Open_Sans',sans-serif]">
      <TabStrip />
      <Toolbar />
      <div className="flex h-[869px]">
        <div className="flex w-[1901px] flex-col">
          <ConsoleHeader />
          <Breadcrumbs />
          <div className="flex h-[707px]">
            <Sidebar />
            <Main />
          </div>
          <Footer />
        </div>
        <div className="flex w-[19px] flex-col items-center bg-[#fcfcfc] pt-[6px]">
          <ScrollArrow />
          <span className="mt-[6px] h-[822px] w-[11px] rounded-full bg-[#8b8b8b]" />
          <ScrollArrow className="mt-auto mb-[4px] rotate-180" />
        </div>
      </div>
      <Taskbar />
    </div>
  );
}
